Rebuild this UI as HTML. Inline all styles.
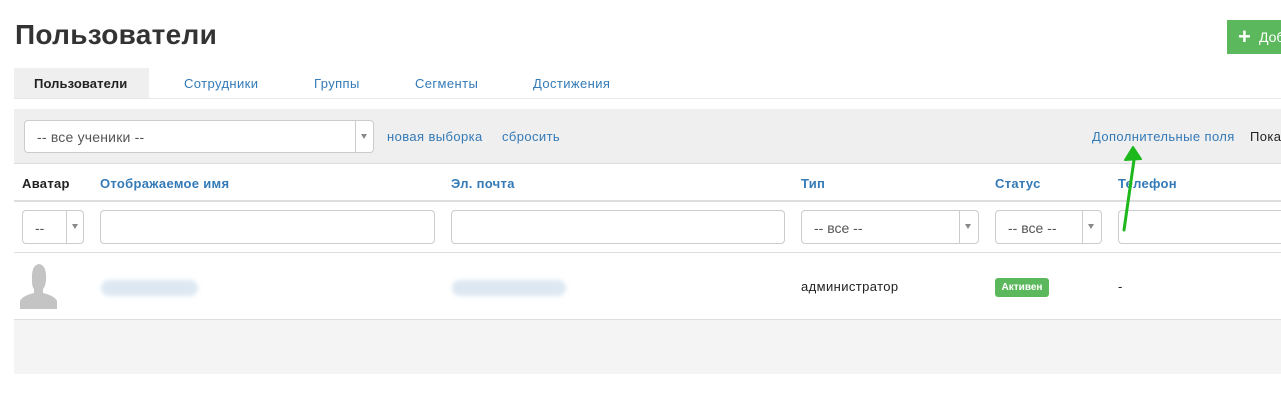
<!DOCTYPE html>
<html><head><meta charset="utf-8"><style>
body{margin:0;width:1281px;height:403px;overflow:hidden;background:#fff;font-family:"Liberation Sans","DejaVu Sans",sans-serif;position:relative}
.a{position:absolute}
.blue{color:#337ab7}
.s13{font-size:13px;letter-spacing:0.4px}
.sel{position:absolute;border:1px solid #ccc;border-radius:4px;background:#fff;box-sizing:border-box;font-size:14px;color:#555}
.sel .t{position:absolute;left:12px;top:8px}
.sel .d{position:absolute;right:0;top:0;bottom:0;width:16px;border-left:1px solid #ccc}
.sel .d:after{content:"";position:absolute;left:5px;top:13px;border-left:3px solid transparent;border-right:3px solid transparent;border-top:5px solid #888}
.th{position:absolute;top:176px;font-size:13px;font-weight:bold;color:#337ab7;letter-spacing:0.3px}
</style></head><body>
<div class="a" style="left:15px;top:19px;font-size:28px;font-weight:bold;color:#333;letter-spacing:0.3px">Пользователи</div>
<div class="a" style="left:1227px;top:20px;width:60px;height:34px;background:#5cb85c;color:#fff;font-size:14px"><span style="position:absolute;left:11px;top:4px;font-size:22px;font-weight:bold">+</span><span style="position:absolute;left:32px;top:9px">Доб</span></div>
<div class="a" style="left:14px;top:68px;width:135px;height:30px;background:#efefef"></div>
<div class="a" style="left:34px;top:76px;font-size:13px;font-weight:bold;color:#222;letter-spacing:0.1px">Пользователи</div>
<div class="a blue s13" style="left:184px;top:76px">Сотрудники</div>
<div class="a blue s13" style="left:314px;top:76px">Группы</div>
<div class="a blue s13" style="left:415px;top:76px">Сегменты</div>
<div class="a blue s13" style="left:533px;top:76px">Достижения</div>
<div class="a" style="left:14px;top:98px;width:1267px;height:1px;background:#e8e8e8"></div>
<div class="a" style="left:14px;top:109px;width:1267px;height:54px;background:#efefef;border-bottom:1px solid #ddd"></div>
<div class="sel" style="left:24px;top:120px;width:350px;height:33px"><span class="t" style="letter-spacing:0.2px">-- все ученики --</span><span class="d" style="width:17px"></span></div>
<div class="a blue s13" style="left:387px;top:129px">новая выборка</div>
<div class="a blue s13" style="left:502px;top:129px">сбросить</div>
<div class="a blue s13" style="left:1092px;top:129px">Дополнительные поля</div>
<div class="a s13" style="left:1250px;top:129px;color:#222">Пока</div>
<div class="th" style="left:22px;color:#222">Аватар</div>
<div class="th" style="left:100px">Отображаемое имя</div>
<div class="th" style="left:451px">Эл. почта</div>
<div class="th" style="left:801px">Тип</div>
<div class="th" style="left:995px">Статус</div>
<div class="th" style="left:1118px">Телефон</div>
<div class="a" style="left:14px;top:200px;width:1267px;height:2px;background:#ddd"></div>
<div class="sel" style="left:22px;top:210px;width:62px;height:34px"><span class="t" style="top:9px">--</span><span class="d"></span></div>
<div class="sel" style="left:100px;top:210px;width:335px;height:34px"></div>
<div class="sel" style="left:451px;top:210px;width:334px;height:34px"></div>
<div class="sel" style="left:801px;top:210px;width:178px;height:34px"><span class="t" style="top:9px">-- все --</span><span class="d" style="width:18px"></span></div>
<div class="sel" style="left:995px;top:210px;width:107px;height:34px"><span class="t" style="top:9px">-- все --</span><span class="d" style="width:18px"></span></div>
<div class="sel" style="left:1118px;top:210px;width:180px;height:34px"></div>
<div class="a" style="left:14px;top:252px;width:1267px;height:1px;background:#ddd"></div>
<svg class="a" style="left:20px;top:263px" width="38" height="46"><path d="M12 18 Q11 2 19 1 Q27 2 26 18 Q25 24 23 26 L23 30 Q35 33 37 38 L37 46 L0 46 L0 38 Q2 33 14 30 L14 26 Q12 24 12 18Z" fill="#c4c4c4"/></svg>
<div class="a" style="left:101px;top:280px;width:97px;height:16px;background:#dde8f2;border-radius:8px;filter:blur(2px)"></div>
<div class="a" style="left:452px;top:280px;width:114px;height:16px;background:#dde8f2;border-radius:8px;filter:blur(2px)"></div>
<div class="a s13" style="left:801px;top:279px;color:#222">администратор</div>
<div class="a" style="left:995px;top:278px;width:54px;height:19px;background:#5cb85c;border-radius:3px;color:#fff;font-size:10px;font-weight:bold;text-align:center;line-height:19px">Активен</div>
<div class="a" style="left:1118px;top:279px;font-size:13px;color:#222">-</div>
<div class="a" style="left:14px;top:319px;width:1267px;height:1px;background:#ddd"></div>
<div class="a" style="left:14px;top:320px;width:1267px;height:54px;background:#f4f4f4"></div>
<svg class="a" style="left:1110px;top:140px" width="40" height="95"><line x1="14" y1="90" x2="24" y2="20" stroke="#1cb81c" stroke-width="3" stroke-linecap="round"/><path d="M15 20 L23 7 L31 19 Z" fill="#1cb81c" stroke="#1cb81c" stroke-width="2" stroke-linejoin="round"/></svg>
</body></html>
